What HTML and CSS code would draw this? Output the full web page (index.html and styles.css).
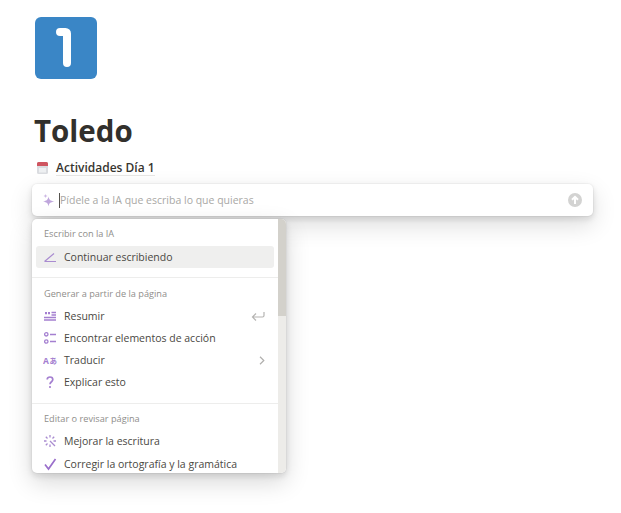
FILE: index.html
```html
<!DOCTYPE html>
<html lang="es">
<head>
<meta charset="utf-8">
<title>Toledo</title>
<link rel="stylesheet" href="styles.css">
</head>
<body>
<main class="page">
  <div class="page-icon"><svg width="62" height="62" viewBox="0 0 62 62"><path d="M25 15h5.500a1.500 1.500 0 0 1 1.500 1.500V46" fill="none" stroke="#fff" stroke-width="8" stroke-linecap="round" stroke-linejoin="round"/></svg></div>
  <h1 class="title">Toledo</h1>
  <div class="subpage">
    <svg class="cal" width="13" height="14" viewBox="0 0 13 14"><rect x="1" y="1" width="11" height="12" rx="1.500" fill="#dadce0"/><path d="M1 5V2.500A1.500 1.500 0 0 1 2.500 1h8A1.500 1.500 0 0 1 12 2.500V5z" fill="#cf5560"/><rect x="3" y="7" width="7" height="4.500" fill="#eef0f2"/></svg>
    <span class="subpage-link">Actividades Día 1</span>
  </div>
  <div class="ai-input">
    <svg class="spark" width="14" height="14" viewBox="0 0 14 14"><path d="M6.500 3.500C7.200 6.800 8 7.700 12.500 8.500 8 9.300 7.200 10 6.500 13.500 5.800 10 5 9.300 1 8.500 5 7.700 5.800 6.800 6.500 3.500z" fill="#bfa6dc"/><path d="M3.500.8C3.800 2.300 4.200 2.700 5.700 3 4.200 3.300 3.800 3.700 3.500 5.200 3.200 3.700 2.800 3.300 1.300 3 2.800 2.700 3.200 2.300 3.500.8z" fill="#cdb9e4"/></svg>
    <span class="caret"></span>
    <span class="placeholder">Pídele a la IA que escriba lo que quieras</span>
    <svg class="send" width="14" height="14" viewBox="0 0 14 14"><circle cx="7" cy="7" r="7" fill="#d3d3d2"/><path d="M7 11V4M4 6.800 7 3.800l3 3" fill="none" stroke="#fff" stroke-width="2"/></svg>
  </div>
  <div class="menu">
    <div class="menu-scroll">
      <section class="group">
        <div class="group-label">Escribir con la IA</div>
        <div class="item active"><svg class="ico" width="14" height="14" viewBox="0 0 14 14"><path d="M1.500 11.500H13M1.500 11.500 11 3.500" fill="none" stroke="#a98bd0" stroke-width="1.200"/></svg><span>Continuar escribiendo</span></div>
      </section>
      <section class="group">
        <div class="group-label">Generar a partir de la página</div>
        <div class="item"><svg class="ico" width="14" height="14" viewBox="0 0 14 14"><path d="M1 8.500h12M1 11h12M8.500 3.500h4.500M8.500 6h4.500" fill="none" stroke="#a47fd0" stroke-width="1.300"/><path d="M2 3h2v2.300h-2zM5 3h2v2.300h-2z" fill="#a47fd0"/></svg><span>Resumir</span><svg class="trail" width="14" height="11" viewBox="0 0 14 11"><path d="M13 1v3.500a1.500 1.500 0 0 1-1.500 1.500H2M5 2.500 1.500 6 5 9.500" fill="none" stroke="#b5b4b2" stroke-width="1.200"/></svg></div>
        <div class="item"><svg class="ico" width="14" height="14" viewBox="0 0 14 14"><circle cx="3.300" cy="3.300" r="1.700" fill="none" stroke="#a47fd0" stroke-width="1.300"/><circle cx="3.300" cy="10.500" r="1.700" fill="none" stroke="#a47fd0" stroke-width="1.300"/><path d="M7 3.500H13M7 10.500H13" stroke="#a47fd0" stroke-width="1.400"/></svg><span>Encontrar elementos de acción</span></div>
        <div class="item"><svg class="ico" width="14" height="14" viewBox="0 0 14 14"><text x="0" y="11" class="ico-a">A</text><text x="6.500" y="11" class="ico-k">あ</text></svg><span>Traducir</span><svg class="trail chev" width="6" height="9" viewBox="0 0 6 9"><path d="M1 .8 4.800 4.500 1 8.200" fill="none" stroke="#b0afad" stroke-width="1.200"/></svg></div>
        <div class="item"><svg class="ico" width="14" height="14" viewBox="0 0 14 14"><path d="M4.200 4.500C4.200 3 5.400 2 7 2s2.800 1 2.800 2.500c0 2.300-2.800 2.200-2.800 4.800" fill="none" stroke="#a47fd0" stroke-width="1.700"/><circle cx="7" cy="12" r="1.100" fill="#a47fd0"/></svg><span>Explicar esto</span></div>
      </section>
      <section class="group">
        <div class="group-label">Editar o revisar página</div>
        <div class="item"><svg class="ico" width="14" height="14" viewBox="0 0 14 14"><g fill="none" stroke="#a98bd0" stroke-width="1.300"><path d="M7 1v2.500M7 10.500v2.500M1 7h2.500M10.500 7H13M2.800 2.800l1.700 1.700M12 12 7 7M2.800 11.200l1.700-1.700M11.200 2.800 9.500 4.500"/></g></svg><span>Mejorar la escritura</span></div>
        <div class="item last"><svg class="ico" width="14" height="14" viewBox="0 0 14 14"><path d="M2 7.500 5.500 12 12.500 2" fill="none" stroke="#9a6fcb" stroke-width="1.700"/></svg><span>Corregir la ortografía y la gramática</span></div>
      </section>
    </div>
    <div class="scrollbar"><div class="thumb"></div></div>
  </div>
</main>
</body>
</html>
```
FILE: styles.css
```css
html, body { margin: 0; padding: 0; background: #fff; overflow: hidden; }
body { font-family: "Open Sans", "Noto Sans", sans-serif; color: #37352f; height: 513px; }
.page { padding: 17px 28px 0 32px; }
.page-icon { width: 62px; height: 62px; margin-left: 3px; background: #3a86c6; border-radius: 6px; }
.page-icon svg { display: block; }
.title { margin: 32px 0 0 2px; font-size: 29.500px; line-height: 40px; font-weight: 700; color: #32302c; }
.subpage { display: flex; align-items: center; height: 20px; margin: 7px 0 0 4px; gap: 7px; }
.cal { flex: none; }
.subpage-link { font-size: 12px; font-weight: 600; line-height: 15px; border-bottom: 1px solid #e6e5e3; color: #37352f; }
.ai-input { display: flex; align-items: center; height: 32px; margin-top: 6px; padding: 0 11px 0 10px; background: #fff; border-radius: 5px; box-shadow: 0 0 0 1px rgba(15,15,15,.03), 0 3px 6px rgba(15,15,15,.12), 0 9px 24px rgba(15,15,15,.14); }
.spark { flex: none; margin-right: 3px; }
.caret { width: 1px; height: 15px; background: #55534e; flex: none; }
.placeholder { flex: 1; font-size: 10.500px; color: #a9a8a5; }
.send { flex: none; }
.menu { display: flex; width: 254px; height: 254px; margin-top: 3px; background: #fff; border-radius: 5px; overflow: hidden; box-shadow: 0 0 0 1px rgba(15,15,15,.03), 0 3px 6px rgba(15,15,15,.12), 0 9px 24px rgba(15,15,15,.16); }
.menu-scroll { flex: 1; min-width: 0; overflow: hidden; }
.scrollbar { flex: none; width: 8px; background: #edece9; }
.thumb { height: 97px; background: #d3d1cb; }
.group { padding: 5px 4px 9px; border-bottom: 1px solid #ededec; }
.group + .group { padding-top: 6px; padding-bottom: 10px; }
.group + .group .group-label { height: 21px; }
.group:last-child { border-bottom: 0; padding-top: 5px; }
.group-label { height: 22px; padding: 0 8px; font-size: 9.200px; line-height: 20px; font-weight: 500; color: #8f8e8b; }
.item { display: flex; align-items: center; height: 22px; padding: 0 8px; border-radius: 3px; font-size: 10.500px; color: #4a4843; }
.item.active { background: #efefee; }
.item.last { margin-top: 1px; }
.ico { flex: none; margin-right: 7px; margin-left: -1px; }
.ico-a { font-family: "Open Sans", sans-serif; font-size: 8.500px; font-weight: 700; fill: #a47fd0; }
.ico-k { font-family: "Noto Sans CJK JP", sans-serif; font-size: 7.500px; font-weight: 700; fill: #a47fd0; }
.trail { margin-left: auto; flex: none; margin-right: 1px; }
.chev { margin-right: 1px; }
```
